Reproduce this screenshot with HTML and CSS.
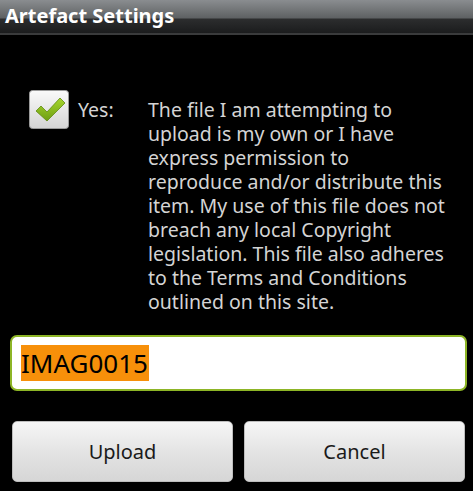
FILE: index.html
```html
<!DOCTYPE html>
<html lang="en">
<head>
    <meta charset="UTF-8">
    <meta name="viewport" content="width=device-width, initial-scale=1.0">
    <title>Artefact Settings</title>
    <link rel="stylesheet" href="styles.css">
</head>
<body>
    <div class="dialog">
        <h1 class="title">Artefact Settings</h1>
        <div class="content">
            <div class="agree">
                <span class="checkbox">
                    <svg width="40" height="39" viewBox="0 0 40 39">
                        <defs>
                            <linearGradient id="box" x1="0" y1="0" x2="0" y2="1">
                                <stop offset="0" stop-color="#fafafa"/>
                                <stop offset="1" stop-color="#d4d4d4"/>
                            </linearGradient>
                            <linearGradient id="tick" x1="0" y1="0" x2="0" y2="1">
                                <stop offset="0" stop-color="#a6d62e"/>
                                <stop offset="1" stop-color="#6e9e12"/>
                            </linearGradient>
                        </defs>
                        <rect x="0.5" y="0.5" width="39" height="38" rx="3" fill="url(#box)" stroke="#9a9a9a"/>
                        <path d="M7 21 L12 16 L18 22 L31 8 L36 13 L18 31 Z" fill="url(#tick)" stroke="#5f8a10" stroke-width="0.8" stroke-linejoin="round"/>
                    </svg>
                </span>
                <span class="yes">Yes:</span>
                <p class="terms">The file I am attempting to upload is my own or I have express permission to reproduce and/or distribute this item. My use of this file does not breach any local Copyright legislation. This file also adheres to the Terms and Conditions outlined on this site.</p>
            </div>
            <div class="field">
                <span class="selected">IMAG0015</span>
            </div>
        </div>
        <div class="buttons">
            <button class="btn">Upload</button>
            <button class="btn">Cancel</button>
        </div>
    </div>
</body>
</html>
```

FILE: styles.css
```css
*, *::before, *::after{
    box-sizing: border-box;
    margin: 0;
    padding: 0;
}

body{
    background: #000;
    font-family: "Noto Sans", "DejaVu Sans", sans-serif;
    width: 473px;
    height: 491px;
    overflow: hidden;
}

.title{
    height: 36px;
    padding: 1px 0 0 5px;
    font-size: 20px;
    font-weight: bold;
    line-height: 30px;
    color: #fff;
    background: linear-gradient(#8a8d90 0, #5e6163 18px, #2c2d2e 19px, #1b1c1d 33px, #3a3b3c 33px, #3a3b3c 35px, #000 35px);
}

.content{
    padding: 54px 0 0 0;
}

.agree{
    display: flex;
    padding-left: 29px;
}

.checkbox{
    width: 40px;
    height: 39px;
    display: block;
}

.checkbox svg{
    display: block;
}

.yes{
    margin-left: 9px;
    width: 70px;
    padding-top: 8px;
    font-size: 19.5px;
    line-height: 24px;
    color: #d4d4d4;
}

.terms{
    width: 300px;
    margin-bottom: -2px;
    padding-top: 8px;
    font-size: 19.5px;
    line-height: 24px;
    color: #d4d4d4;
}

.field{
    margin: 23px 6px 0 10px;
    height: 56px;
    border: 2px solid #8db526;
    border-radius: 7px;
    background: #fff;
    padding: 8px 0 0 9px;
}

.selected{
    display: inline-block;
    background: #f7900a;
    color: #000;
    font-size: 26px;
    line-height: 36px;
    padding-right: 1px;
}

.buttons{
    display: grid;
    grid-template-columns: 1fr 1fr;
    gap: 11px;
    padding: 30px 8px 0 12px;
}

.btn{
    height: 61px;
    border: 1px solid #bdbdbd;
    border-radius: 5px;
    background: linear-gradient(#f6f6f6, #e4e4e4 50%, #d6d6d6);
    font-family: inherit;
    font-size: 20px;
    color: #1a1a1a;
}
```
